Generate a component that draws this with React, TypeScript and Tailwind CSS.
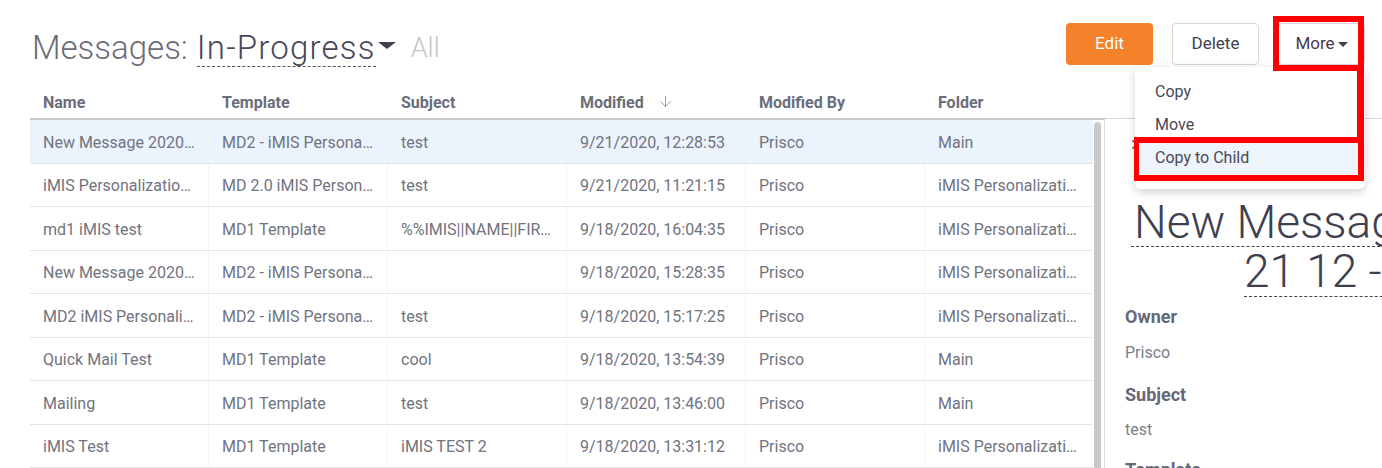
import { ArrowDown, X } from 'lucide-react';

const rows = [
  ['New Message 2020-09-21 12:08', 'MD2 - iMIS Personalization', 'test', '9/21/2020, 12:28:53', 'Prisco', 'Main'],
  ['iMIS Personalization Test', 'MD 2.0 iMIS Personalization', 'test', '9/21/2020, 11:21:15', 'Prisco', 'iMIS Personalization Tests'],
  ['md1 iMIS test', 'MD1 Template', '%%IMIS||NAME||FIRST', '9/18/2020, 16:04:35', 'Prisco', 'iMIS Personalization Tests'],
  ['New Message 2020-09-18', 'MD2 - iMIS Personalization', '', '9/18/2020, 15:28:35', 'Prisco', 'iMIS Personalization Tests'],
  ['MD2 iMIS Personalization', 'MD2 - iMIS Personalization', 'test', '9/18/2020, 15:17:25', 'Prisco', 'iMIS Personalization Tests'],
  ['Quick Mail Test', 'MD1 Template', 'cool', '9/18/2020, 13:54:39', 'Prisco', 'Main'],
  ['Mailing', 'MD1 Template', 'test', '9/18/2020, 13:46:00', 'Prisco', 'Main'],
  ['iMIS Test', 'MD1 Template', 'iMIS TEST 2', '9/18/2020, 13:31:12', 'Prisco', 'iMIS Personalization Tests'],
];

const cols = ['Name', 'Template', 'Subject', 'Modified', 'Modified By', 'Folder'];

function Cell({ text, last }: { text: string; last?: boolean }) {
  return (
    <div
      className={`h-full flex items-center pt-[3px] px-[13px] min-w-0 ${last ? 'w-[168px]' : 'w-[179px] border-r border-[#f3f3f3]'}`}
    >
      <span className="truncate">{text}</span>
    </div>
  );
}

export default function App() {
  return (
    <div className="relative w-[1382px] h-[468px] overflow-hidden bg-white font-['Roboto','Liberation_Sans',sans-serif] text-[#71737f]">
      {/* Page header */}
      <div className="flex items-start justify-between h-[85px] pl-[32px] pr-[17px]">
        <div className="flex items-end mt-[29px] font-light text-[33px] leading-[38px]">
          <span className="text-[#6c6c76]">Messages:</span>
          <span className="ml-[9px] text-[#464859] tracking-[1.2px] border-b border-dashed border-[#555] leading-[37px]">In-Progress</span>
          <svg className="ml-[2px] mb-[17px]" width="18" height="8" viewBox="0 0 18 8">
            <path d="M0 0 H18 L9 7 Z" fill="#3e4050" />
          </svg>
          <span className="ml-[15px] text-[#c6c6c6] text-[27px]">All</span>
        </div>
        <div className="flex gap-[19px] mt-[23px] text-[17px]">
          <button className="w-[87px] h-[42px] rounded bg-[#f5822a] text-white">Edit</button>
          <button className="w-[87px] h-[42px] rounded border border-[#d6d6d6] text-[#3e4050]">Delete</button>
          <button className="w-[87px] h-[42px] rounded border border-[#d6d6d6] text-[#4a3a4a] flex items-center justify-center gap-[3px]">
            More
            <svg width="10" height="5" viewBox="0 0 10 5">
              <path d="M0 0 H10 L5 5 Z" fill="#3e4050" />
            </svg>
          </button>
        </div>
      </div>

      <div className="flex">
        {/* Table */}
        <div className="pl-[30px] w-[1104px] text-[16px]">
          <div className="flex h-[35px] pt-[3px] border-b-2 border-[#c9c9cc] font-bold text-[#6a6d7a] w-[1074px]">
            {cols.map((c) => (
              <div key={c} className="w-[179px] px-[13px] flex items-center">
                {c}
                {c === 'Modified' && <ArrowDown className="ml-[13px] -mt-[4px]" size={17} strokeWidth={1.2} color="#8a8a90" />}
              </div>
            ))}
          </div>
          <div className="flex">
            <div className="w-[1063px]">
              {rows.map((r, i) => (
                <div
                  key={i}
                  className={`flex h-[43.5px] border-b border-[#e4e4e6] ${i === 0 ? 'bg-[#ebf4fc]' : ''}`}
                >
                  {r.map((t, j) => (
                    <Cell key={j} text={t} last={j === 5} />
                  ))}
                </div>
              ))}
            </div>
            <div className="w-[11px] pl-[1px] pt-[2px]">
              <div className="w-[7px] h-[400px] rounded-t bg-[#c9c9c9]" />
            </div>
          </div>
        </div>

        {/* Detail panel */}
        <div className="mt-[33px] flex-1 border-l border-t border-[#d9d9dc] pl-[20px] pt-[18px]">
          <X className="ml-[4px]" size={15} strokeWidth={2} color="#555" />
          <div className="mt-[46px] ml-[6px] font-light text-[46px] leading-[48px] text-[#3e4050] whitespace-nowrap">
            <div>
              <span className="border-b border-dashed border-[#444] pl-[3px] inline-block leading-[47px]">New Message 2020-09-</span>
            </div>
            <div className="ml-[113px]">
              <span className="border-b border-dashed border-[#444] inline-block leading-[49px]">21 12 -08</span>
            </div>
          </div>
          <div className="mt-[6px] text-[18px] font-bold text-[#656877]">Owner</div>
          <div className="mt-[11px] text-[16px] text-[#7a7d8a]">Prisco</div>
          <div className="mt-[16px] text-[18px] font-bold text-[#656877]">Subject</div>
          <div className="mt-[10px] text-[16px] text-[#7a7d8a]">test</div>
          <div className="mt-[14px] text-[18px] font-bold text-[#656877]">Template</div>
        </div>
      </div>

      {/* More dropdown */}
      <div className="absolute left-[1135px] top-[67px] w-[230px] h-[122px] bg-white rounded-md shadow-[0_3px_10px_rgba(0,0,0,0.18)] pt-[8px] text-[16px] text-[#464859]">
        <div className="h-[33px] flex items-center pl-[20px]">Copy</div>
        <div className="h-[33px] flex items-center pl-[20px]">Move</div>
        <div className="h-[33px] flex items-center pl-[20px] bg-[#eef4fb]">Copy to Child</div>
      </div>

      {/* Red annotation boxes */}
      <div className="absolute left-[1273px] top-[16px] w-[91px] h-[55px] border-[6px] border-[#ff0000]" />
      <div className="absolute left-[1357px] top-[70px] w-[7px] h-[68px] bg-[#ff0000]" />
      <div className="absolute left-[1134px] top-[137px] w-[230px] h-[44px] border-[6px] border-l-[5px] border-[#ff0000]" />
    </div>
  );
}
